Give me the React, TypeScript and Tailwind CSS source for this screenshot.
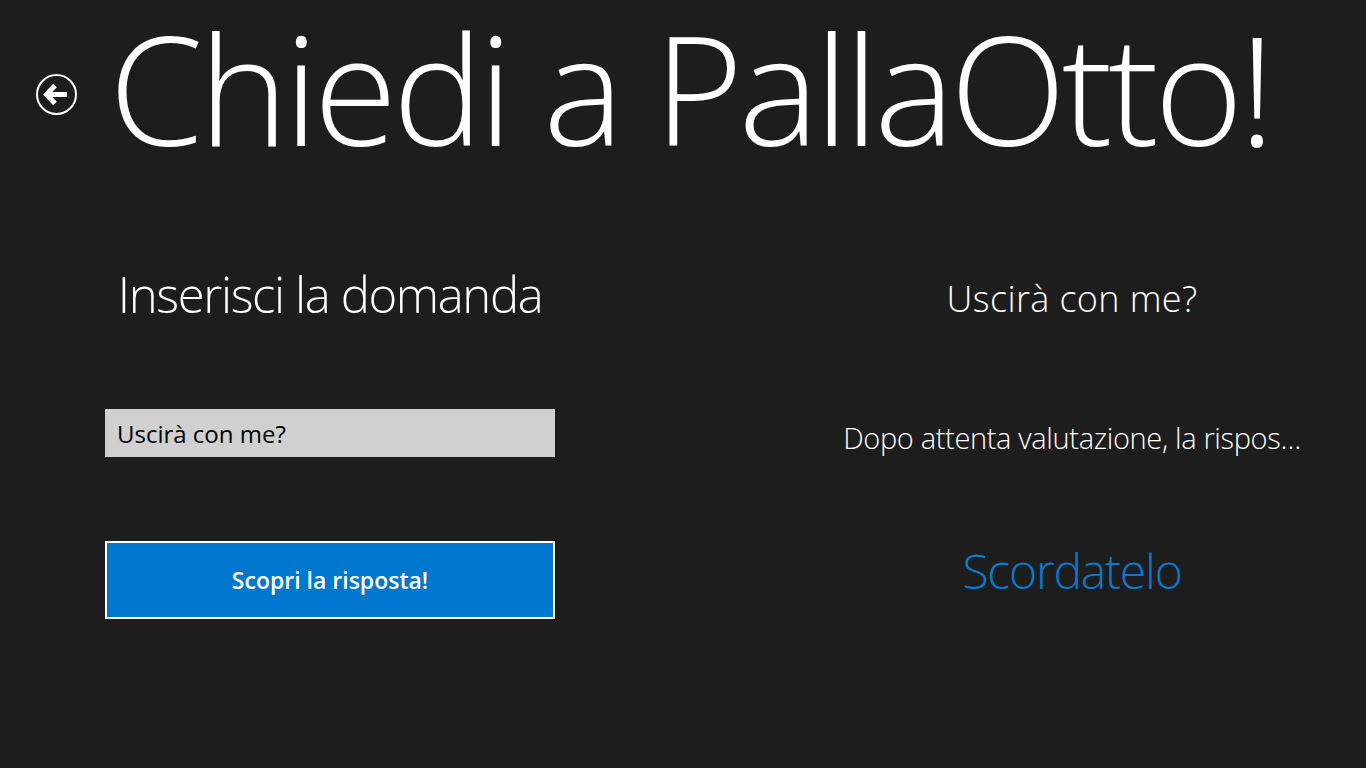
const FONT = { fontFamily: '"Open Sans", "Noto Sans", sans-serif' };

function BackButton() {
	return (
		<button className="mt-[74px] ml-[36px] h-[41px] w-[41px] shrink-0">
			<svg viewBox="0 0 41 41" width="41" height="41" fill="none">
				<circle cx="20.5" cy="20.5" r="19.5" stroke="white" strokeWidth="2" />
				<path d="M11 20.5H31" stroke="white" strokeWidth="5" />
				<path d="M19 11.5L10.5 20.5L19 29.5" stroke="white" strokeWidth="5" strokeLinejoin="miter" />
			</svg>
		</button>
	);
}

export default function App() {
	return (
		<div className="h-[768px] w-[1366px] overflow-hidden bg-[#1d1d1d] text-white" style={FONT}>
			{/* header */}
			<div className="flex h-[200px] items-start">
				<BackButton />
				<h1 className="mt-[1px] ml-[32px] pr-4 text-[152px] font-light leading-[1.15] tracking-[-0.03em] whitespace-nowrap">
					Chiedi a PallaOtto!
				</h1>
			</div>

			<div className="flex">
				{/* left column */}
				<div className="ml-[105px] flex w-[450px] flex-col">
					<h2 className="mt-[70px] text-center text-[49px] font-light leading-none tracking-[-0.028em] whitespace-nowrap">
						Inserisci la domanda
					</h2>
					<input
						className="mt-[90px] h-[48px] w-[450px] bg-[#d0d0d0] px-[12px] text-[24px] text-black outline-none"
						defaultValue="Uscirà con me?"
					/>
					<button className="mt-[84px] h-[78px] w-[450px] border-2 border-white bg-[#0078d0] text-[23px] font-semibold">
						Scopri la risposta!
					</button>
				</div>

				{/* right column */}
				<div className="ml-auto flex w-[588px] flex-col items-center">
					<div className="mt-[81px] text-[36px] font-light leading-none tracking-[0.01em] whitespace-nowrap">
						Uscirà con me?
					</div>
					<div className="mt-[106px] text-[29px] font-light leading-none tracking-[-0.012em] whitespace-nowrap">
						Dopo attenta valutazione, la rispos…
					</div>
					<div className="mt-[95px] text-[48px] font-light leading-none tracking-[-0.025em] text-[#0a78cd] whitespace-nowrap">
						Scordatelo
					</div>
				</div>
			</div>
		</div>
	);
}
